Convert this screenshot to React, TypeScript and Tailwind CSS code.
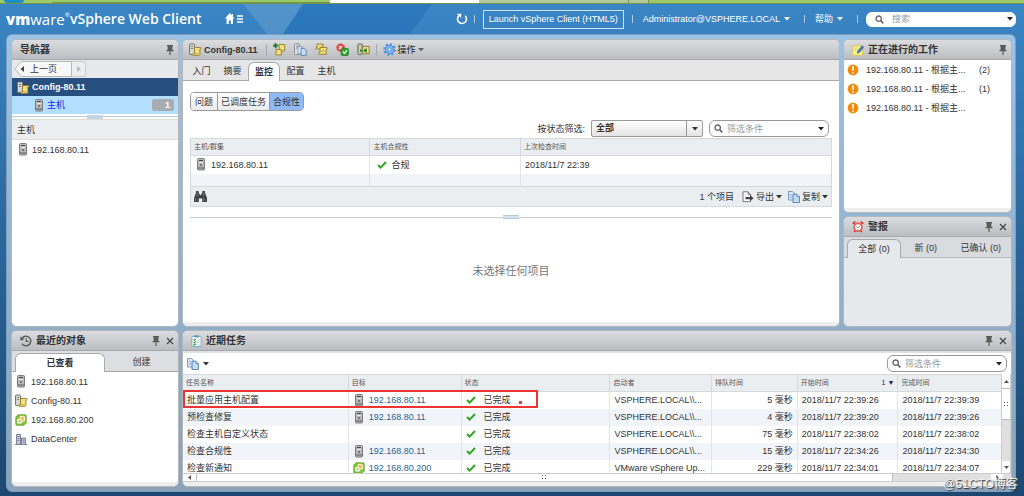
import type { ReactNode } from "react";

/* ---------- icons ---------- */

function HostIcon() {
  return (
    <svg width="12" height="13" viewBox="0 0 12 13" className="shrink-0" aria-hidden="true">
      <rect x="2.5" y="0.5" width="7" height="11.5" rx="1" fill="#b9b9b9" stroke="#7b7b7b" />
      <rect x="4" y="2" width="4" height="1" fill="#444" />
      <rect x="4" y="4" width="4" height="1" fill="#e8e8e8" />
      <rect x="5" y="6" width="2" height="2" fill="#777" />
      <rect x="3" y="9" width="6" height="2" fill="#8a8a8a" />
    </svg>
  );
}

function ProfileIcon() {
  return (
    <svg width="13" height="13" viewBox="0 0 13 13" className="shrink-0" aria-hidden="true">
      <rect x="0.5" y="1" width="5" height="10.5" rx="0.8" fill="#d7d7d2" stroke="#77766c" />
      <path d="M2 3.5h2M2 5.5h2" stroke="#666" strokeWidth="0.8" />
      <path d="M5.5 4.5h6.2q.8.8 0 1.6h-.8v5.4q-.3.9-1.2.9H4q-1-.8 0-1.7h1.5z" fill="#f3df7c" stroke="#8c7420" strokeWidth="0.8" />
      <path d="M5.5 10.7h4" stroke="#b99d38" strokeWidth="0.8" />
    </svg>
  );
}

function VCenterIcon() {
  return (
    <svg width="12" height="12" viewBox="0 0 12 12" className="shrink-0" aria-hidden="true">
      <path d="M3 .8h7.2q1 0 1 1V9L9 11.2H1.8q-1 0-1-1V3z" fill="#86c440" stroke="#5fa021" strokeWidth="0.8" />
      <rect x="2.2" y="5" width="4.6" height="4.6" rx="0.8" fill="#fff" />
      <rect x="5" y="2.4" width="4.6" height="4.6" rx="0.8" fill="#f6c445" stroke="#fff" strokeWidth="0.9" />
      <rect x="3.6" y="6.4" width="1.8" height="1.8" fill="#86c440" />
    </svg>
  );
}

function DatacenterIcon() {
  return (
    <svg width="12" height="12" viewBox="0 0 12 12" className="shrink-0" aria-hidden="true">
      <path d="M1.5 11V1.5h4V11M6.5 11V5h4v6" fill="#c8cbe0" stroke="#73768f" strokeWidth="0.9" />
      <path d="M2.5 3.5h2M2.5 5.5h2M2.5 7.5h2M7.5 7h2M7.5 9h2" stroke="#62668a" strokeWidth="0.8" />
      <path d="M0 11.4h12" stroke="#73768f" />
    </svg>
  );
}

function PinIcon() {
  return (
    <svg width="8" height="10" viewBox="0 0 8 10" aria-hidden="true">
      <path d="M1 0h6v1.2H6.4V5h1.1v1.3H4.6V10H3.4V6.3H.5V5h1.1V1.2H1z" fill="#5a5a5a" />
    </svg>
  );
}

function CloseIcon() {
  return (
    <svg width="8" height="8" viewBox="0 0 8 8" aria-hidden="true">
      <path d="M1 1l6 6M7 1L1 7" stroke="#444" strokeWidth="1.2" />
    </svg>
  );
}

function CheckIcon() {
  return (
    <svg width="10" height="8" viewBox="0 0 10 8" className="shrink-0" aria-hidden="true">
      <path d="M1 4l2.6 2.6L9 1" fill="none" stroke="#2fa51f" strokeWidth="2" />
    </svg>
  );
}

function CaretIcon() {
  return (
    <svg width="6" height="4" viewBox="0 0 6 4" className="shrink-0" aria-hidden="true">
      <path d="M0 0h6L3 3.6z" fill="currentColor" />
    </svg>
  );
}

function SearchIcon() {
  return (
    <svg width="9" height="9" viewBox="0 0 9 9" className="shrink-0" aria-hidden="true">
      <circle cx="3.7" cy="3.7" r="2.7" fill="none" stroke="#666" strokeWidth="1.4" />
      <path d="M5.7 5.7l2.6 2.6" stroke="#666" strokeWidth="1.7" />
    </svg>
  );
}

function WarningIcon() {
  return (
    <svg width="12" height="12" viewBox="0 0 12 12" className="shrink-0" aria-hidden="true">
      <circle cx="6" cy="6" r="5.4" fill="#f58a07" />
      <path d="M5 2.3h2L6.6 7H5.4z" fill="#fff" />
      <circle cx="6" cy="8.9" r="0.9" fill="#fff" />
    </svg>
  );
}

function CopyIcon() {
  return (
    <svg width="12" height="12" viewBox="0 0 12 12" className="shrink-0" aria-hidden="true">
      <path d="M.5.5h4l2 2V9h-6z" fill="#dbe8f6" stroke="#6f94bf" strokeWidth="0.9" />
      <path d="M1.8 3.5h2M1.8 5h2M1.8 6.5h2" stroke="#88a9cf" strokeWidth="0.7" />
      <path d="M5 3.2h4l2.4 2.4v6H5z" fill="#c6dcf3" stroke="#4d78ab" strokeWidth="0.9" />
      <path d="M9 3.2v2.4h2.4" fill="#fff" stroke="#4d78ab" strokeWidth="0.8" />
    </svg>
  );
}

function ExportIcon() {
  return (
    <svg width="12" height="12" viewBox="0 0 12 12" className="shrink-0" aria-hidden="true">
      <path d="M1 .8h5L8.6 3.4v7.2H1z" fill="#fff" stroke="#666" strokeWidth="0.9" />
      <path d="M6 .8v2.6h2.6" fill="none" stroke="#666" strokeWidth="0.8" />
      <path d="M3.5 6H8V4l3.6 3.2L8 10.2v-2H3.5z" fill="#444" />
    </svg>
  );
}

function HistoryIcon() {
  return (
    <svg width="12" height="12" viewBox="0 0 12 12" aria-hidden="true">
      <path d="M2.2 3A4.8 4.8 0 1 1 2 8.6" fill="none" stroke="#5d5d5d" strokeWidth="1.5" />
      <path d="M0 1.5l.6 4.3 4-1.5z" fill="#5d5d5d" />
      <path d="M6.2 3.3v3h2.5" fill="none" stroke="#5d5d5d" strokeWidth="1.2" />
    </svg>
  );
}

function TasksIcon() {
  return (
    <svg width="11" height="12" viewBox="0 0 11 12" aria-hidden="true">
      <rect x="0.9" y="1.4" width="9.2" height="10" rx="1" fill="#fff" stroke="#79a9ca" />
      <rect x="3.4" y="0.2" width="4.2" height="2.2" rx="0.6" fill="#5f95bd" />
      <path d="M2.5 4.6l.8.8L5 3.8M2.5 7.1l.8.8L5 6.3M2.5 9.5l.8.8L5 8.7" fill="none" stroke="#3aa02b" strokeWidth="1.1" />
      <path d="M6 5h2.6M6 7.4h2.6M6 9.8h2.6" stroke="#a6c0d2" strokeWidth="0.8" />
    </svg>
  );
}

function NoteIcon() {
  return (
    <svg width="12" height="12" viewBox="0 0 12 12" aria-hidden="true">
      <path d="M.6 1.6h10v9.8H.6z" fill="#fbf08b" stroke="#d0c05c" strokeWidth="0.8" />
      <path d="M2 4h4M2 6h3" stroke="#d0c268" strokeWidth="0.8" />
      <path d="M10 1.8l1.6 1.5-4 5-2.3.9.6-2.4z" fill="#3f86c9" stroke="#27517c" strokeWidth="0.6" />
    </svg>
  );
}

function AlarmIcon() {
  return (
    <svg width="12" height="12" viewBox="0 0 12 12" aria-hidden="true">
      <path d="M1.2 3.2q.2-1.8 2.2-2.1M10.8 3.2q-.2-1.8-2.2-2.1M3.2 9.4l-.9 1.6M8.8 9.4l.9 1.6" fill="none" stroke="#d33b36" strokeWidth="2" />
      <circle cx="6" cy="6.3" r="3.9" fill="#fff" stroke="#e0605b" strokeWidth="1.8" />
      <path d="M4.4 5.4L6 6.8l1.8-1.6" fill="none" stroke="#777" strokeWidth="0.9" />
    </svg>
  );
}

function GearIcon() {
  return (
    <svg width="13" height="13" viewBox="0 0 13 13" className="shrink-0" aria-hidden="true">
      <circle cx="6.5" cy="6.5" r="5.3" fill="none" stroke="#4a90d9" strokeWidth="2" strokeDasharray="2.1 2" />
      <circle cx="6.5" cy="6.5" r="4" fill="#8fc3f3" stroke="#4a90d9" strokeWidth="1.2" />
      <circle cx="6.5" cy="6.5" r="1.7" fill="#e8f3fd" stroke="#3e7cc4" strokeWidth="0.9" />
    </svg>
  );
}

function BinocularsIcon() {
  return (
    <svg width="13" height="11" viewBox="0 0 13 11" aria-hidden="true">
      <path d="M2 0h2.6v1.3L6 4h1l1.4-2.7V0H11v1.6L13 7v4H8.2V7.4H4.8V11H0V7l2-5.4z" fill="#444" />
      <path d="M1.6 7v3M9.8 7v3M3.2 2v3M9.8 2v3" stroke="#8b8b8b" strokeWidth="0.8" />
    </svg>
  );
}

function AttachProfileIcon() {
  return (
    <svg width="13" height="13" viewBox="0 0 13 13" aria-hidden="true">
      <path d="M6 1.5h6.2q.6 1-.6 1.6V8H6.4z" fill="#f3df7c" stroke="#8c7420" strokeWidth="0.8" />
      <path d="M3 6.5h5.4v5.4H3q-1-.8 0-1.6z" fill="#f3df7c" stroke="#8c7420" strokeWidth="0.8" />
      <path d="M2.6 0v5.2M0 2.6h5.2" stroke="#1c7b1c" strokeWidth="1.7" />
    </svg>
  );
}

function CopySettingsIcon() {
  return (
    <svg width="13" height="13" viewBox="0 0 13 13" aria-hidden="true">
      <rect x="0.5" y="0.9" width="5" height="10.6" rx="0.8" fill="#e2e2e2" stroke="#85858a" strokeWidth="0.9" />
      <path d="M2 3h2M2 5h2" stroke="#777" strokeWidth="0.8" />
      <path d="M4 3.6h4v7H4z" fill="#dce9f7" stroke="#6f94bf" strokeWidth="0.8" />
      <path d="M7 5.4h3l2.2 2v5H7z" fill="#c6dcf3" stroke="#4d78ab" strokeWidth="0.8" />
    </svg>
  );
}

function DuplicateProfileIcon() {
  return (
    <svg width="13" height="13" viewBox="0 0 13 13" aria-hidden="true">
      <path d="M2 1h6.2q.8.8 0 1.6h-.8V6H1q-.8-.8 0-1.5h1z" fill="#f0dc80" stroke="#8c7420" strokeWidth="0.8" />
      <path d="M5 4.5h7q.8.9 0 1.8h-.8v5H4q-1-.8 0-1.7h1z" fill="#f3df7c" stroke="#8c7420" strokeWidth="0.8" />
      <path d="M6 8h4" stroke="#b99d38" strokeWidth="0.9" />
    </svg>
  );
}

function ComplianceIcon() {
  return (
    <svg width="13" height="13" viewBox="0 0 13 13" aria-hidden="true">
      <circle cx="4.6" cy="4.6" r="4.2" fill="#e2403c" />
      <path d="M2.9 2.9l3.4 3.4M6.3 2.9L2.9 6.3" stroke="#fff" strokeWidth="1.2" />
      <rect x="5.2" y="5.4" width="7.2" height="7" rx="1" fill="#35a637" stroke="#1f7d21" strokeWidth="0.8" />
      <path d="M6.9 8.7l1.5 1.6 2.6-2.9" fill="none" stroke="#fff" strokeWidth="1.2" />
    </svg>
  );
}

function RemediateIcon() {
  return (
    <svg width="13" height="13" viewBox="0 0 13 13" aria-hidden="true">
      <rect x="0.9" y="1" width="4.4" height="10.4" rx="0.8" fill="#c9cbb8" stroke="#5c6050" strokeWidth="0.9" />
      <path d="M5.6 3.4h6.6v7.4H5.6z" fill="#ecdf93" stroke="#7d6d25" strokeWidth="0.8" />
      <path d="M9.5 5.6L6.4 7.6l3.1 2zM3 6.4l1.8 1.3L3 9" fill="#288a2a" stroke="#288a2a" strokeWidth="0.7" />
    </svg>
  );
}

/* triangles and grips of the scroll bars */
function ArrowIcon({ d }: { d: string }) {
  return (
    <svg width="5" height="5" viewBox="0 0 5 5" aria-hidden="true">
      <path d={d} fill="#555" />
    </svg>
  );
}

function GripIcon() {
  return (
    <svg width="5" height="5" viewBox="0 0 5 5" aria-hidden="true">
      <path d="M0 0h1v1H0zM3 0h1v1H3zM0 3h1v1H0zM3 3h1v1H3z" fill="#555" />
    </svg>
  );
}

/* ---------- shared pieces ---------- */

const panel = "flex min-h-0 min-w-0 flex-col overflow-hidden rounded-md border border-[#b3b7bc] bg-white";

type PanelHeaderProps = { icon?: ReactNode; title: string; closable?: boolean };

function PanelHeader({ icon, title, closable }: PanelHeaderProps) {
  return (
    <header className="flex h-5 shrink-0 items-center gap-1 border-b border-[#a7a9ac] bg-linear-to-b from-[#dcdde0] to-[#bbbdc0] pl-2 pr-1">
      {icon}
      <h2 className="flex-1 truncate text-[10px] font-bold text-[#333]">{title}</h2>
      <button aria-label="固定"><PinIcon /></button>
      {closable && <button aria-label="关闭" className="ml-0.5"><CloseIcon /></button>}
    </header>
  );
}

function SearchBox({ placeholder, className }: { placeholder: string; className: string }) {
  return (
    <label className={`flex items-center rounded-md border bg-white text-[#222] ${className}`}>
      <SearchIcon />
      <input aria-label={placeholder} placeholder={placeholder} className="w-0 flex-1 bg-transparent outline-none placeholder:text-[#999]" />
      <CaretIcon />
    </label>
  );
}

/* ---------- top bar ---------- */

function BrowserStrip() {
  return (
    <div className="flex h-1 shrink-0 border-b border-[#73954b] bg-[#9dc969]">
      <div className="ml-1 w-5 rounded-b-sm bg-[#1b8fc4]" />
      <div className="ml-7 w-[278px] border-b border-[#73954b]" />
      <div className="w-[149px] bg-white" />
      <div className="w-[150px] border-r border-[#73954b] bg-[#b4c79c]" />
      <div className="w-5 border-r border-[#73954b] bg-[#b4c79c]" />
    </div>
  );
}

function TopBar() {
  return (
    <div className="relative h-[30px] shrink-0">
      <svg className="absolute inset-y-0 left-0" width="440" height="30" aria-hidden="true">
        <path d="M243 0h60l-20 30h-16z" fill="#fff" opacity="0.12" />
        <path d="M303 0h129l-22 30H283z" fill="#1560b0" opacity="0.35" />
      </svg>
      <div className="relative flex h-full items-center pl-1.5 text-white">
        <span className="flex w-16 text-[15px] font-normal leading-5 font-['Open_Sans',sans-serif]">
          <b className="font-extrabold">vm</b>ware<span className="text-[6px] leading-3">®</span>
        </span>
        <h1 className="text-[14px] font-semibold leading-5 font-['Open_Sans',sans-serif]">vSphere Web Client</h1>
        <button aria-label="主页" className="ml-6">
          <svg width="19" height="12" viewBox="0 0 19 12" aria-hidden="true">
            <path d="M4.8 0L0 5.6h1.6V11h2.2V7.4h2V11H8V5.6h1.6L8 3.7V1H6.8v1.3z" fill="#fff" />
            <path d="M12 3h6M12 6h6M12 9h6" stroke="#fff" strokeWidth="1.4" />
          </svg>
        </button>
        <div className="ml-auto flex items-center">
          <button aria-label="刷新">
            <svg width="12" height="12" viewBox="0 0 12 12" aria-hidden="true">
              <path d="M3 2.6a4.5 4.5 0 1 0 6.2.2" fill="none" stroke="#fff" strokeWidth="1.6" />
              <path d="M.6.8h4.6v4.4L3.6 3.4z" fill="#fff" />
            </svg>
          </button>
          <span className="ml-1.5 h-2 w-px bg-[#a9cbe8]" />
          <a href="#" className="ml-2 flex h-[19px] items-center border border-[#cfe2f3] px-[5px]">Launch vSphere Client (HTML5)</a>
          <span className="ml-2 h-2 w-px bg-[#a9cbe8]" />
          <button className="ml-2.5 flex items-center gap-1">Administrator@VSPHERE.LOCAL <CaretIcon /></button>
          <span className="ml-3.5 h-2 w-px bg-[#a9cbe8]" />
          <button className="ml-2.5 flex items-center gap-1">帮助 <CaretIcon /></button>
          <span className="ml-3.5 mr-2 h-2 w-px bg-[#a9cbe8]" />
          <SearchBox placeholder="搜索" className="mr-2 h-[15px] w-[150px] gap-2 rounded-lg border-white pl-2 pr-0.5" />
        </div>
      </div>
    </div>
  );
}

/* ---------- left column ---------- */

function Navigator() {
  return (
    <nav className={`${panel} flex-1`}>
      <PanelHeader title="导航器" />
      <div className="flex h-[18px] shrink-0 items-center bg-[#e6e8ec] pl-0.5">
        <button className="relative flex h-4 w-[58px] items-center">
          <svg className="absolute inset-0" width="58" height="16" aria-hidden="true">
            <path d="M7.5.5h50v15h-50L.8 8z" fill="#f7f7f7" stroke="#b5b7ba" />
            <path d="M10 5v6L6.5 8z" fill="#444" />
          </svg>
          <span className="relative pl-4">上一页</span>
        </button>
        <button aria-label="前进" className="flex h-4 w-3.5 items-center justify-center rounded-r-sm border border-l-0 border-[#c9cbd0] bg-[#eceef0]">
          <svg width="4" height="6" aria-hidden="true"><path d="M0 0v6l4-3z" fill="#b5b7ba" /></svg>
        </button>
      </div>
      <a href="#" className="flex h-[18px] shrink-0 items-center gap-0.5 bg-[#274f80] pl-[5px] font-bold text-white">
        <ProfileIcon /> Config-80.11
      </a>
      <a href="#" className="flex h-[18px] shrink-0 items-center gap-0.5 bg-[#b3dfff] pl-[21px] pr-1 text-[#2222ee]">
        <HostIcon /> <span className="flex-1">主机</span>
        <span className="flex h-3 w-[22px] items-center justify-end rounded-xs bg-[#a9adb1] pr-1 font-bold text-white">1</span>
      </a>
      <div className="flex h-[6px] shrink-0 items-center justify-center border-b border-[#ddd] bg-white">
        <span className="h-px flex-1 bg-[#bccbdc]" />
        <span className="h-1 w-4 bg-[#c5d4e4]" />
        <span className="h-px flex-1 bg-[#bccbdc]" />
      </div>
      <h3 className="flex h-5 shrink-0 items-center border-b border-[#ddd] bg-[#ebeef1] pl-[5px]">主机</h3>
      <a href="#" className="flex h-[19px] items-center gap-[3px] pl-[5px]"><HostIcon /> 192.168.80.11</a>
    </nav>
  );
}

const recentObjects = [
  { icon: <HostIcon />, name: "192.168.80.11" },
  { icon: <ProfileIcon />, name: "Config-80.11" },
  { icon: <VCenterIcon />, name: "192.168.80.200" },
  { icon: <DatacenterIcon />, name: "DataCenter" },
];

function RecentObjects() {
  return (
    <section className={`${panel} h-full`}>
      <PanelHeader icon={<HistoryIcon />} title="最近的对象" closable />
      <div className="flex h-[21px] shrink-0 items-end border-b border-[#a7a9ac] bg-[#dcdee2] pl-[3px]">
        <button className="-mb-px h-[19px] w-[90px] rounded-t-md border border-b-0 border-[#a7a9ac] bg-white font-bold">已查看</button>
        <button className="h-[19px] flex-1">创建</button>
      </div>
      <ul className="flex-1">
        {recentObjects.map((o) => (
          <li key={o.name}>
            <a href="#" className="flex h-[19px] items-center pl-[3px]">
              <span className="flex w-4">{o.icon}</span>{o.name}
            </a>
          </li>
        ))}
      </ul>
      <div className="h-1 shrink-0 bg-[#eee]" />
    </section>
  );
}

/* ---------- centre ---------- */

const tabs = ["入门", "摘要", "监控", "配置", "主机"];
const toolbar = [
  { label: "附加", icon: <AttachProfileIcon /> },
  { label: "复制设置", icon: <CopySettingsIcon /> },
  { label: "复制配置文件", icon: <DuplicateProfileIcon /> },
  { label: "检查合规性", icon: <ComplianceIcon /> },
  { label: "修复", icon: <RemediateIcon /> },
];

function Workspace() {
  return (
    <main className={`${panel} flex-1`}>
      <header className="flex h-5 shrink-0 items-center border-b border-[#a7a9ac] bg-linear-to-b from-[#dcdde0] to-[#bbbdc0] pl-1.5">
        <ProfileIcon />
        <h2 className="ml-0.5 font-bold">Config-80.11</h2>
        <span className="ml-2 mr-1.5 h-3 w-px bg-[#a7a9ac]" />
        <div className="flex gap-2">
          {toolbar.map((t) => (
            <button key={t.label} aria-label={t.label}>{t.icon}</button>
          ))}
        </div>
        <span className="mx-1.5 h-3 w-px bg-[#a7a9ac]" />
        <button className="flex items-center gap-0.5 text-[#222]"><GearIcon />操作 <span className="flex text-[#666]"><CaretIcon /></span></button>
      </header>
      <div className="flex h-[21px] shrink-0 items-end border-b border-[#a7a9ac] bg-[#e6e6e6] pl-[3px]">
        {tabs.map((t) =>
          t === "监控" ? (
            <button key={t} className="-mb-px h-[19px] w-8 rounded-t-md border border-b-0 border-[#a7a9ac] bg-white font-bold">{t}</button>
          ) : (
            <button key={t} className="h-[18px] w-[31px]">{t}</button>
          )
        )}
      </div>
      <div className="flex min-h-0 flex-1 flex-col px-[7px] pt-[11px]">
        <div className="flex h-[19px] w-fit shrink-0 divide-x divide-[#999] overflow-hidden rounded-sm border border-[#999]">
          <button className="bg-linear-to-b from-white to-[#eaeaea] px-1">问题</button>
          <button className="bg-linear-to-b from-white to-[#eaeaea] px-[3px]">已调度任务</button>
          <button className="bg-[#8fbaf8] px-[3px]">合规性</button>
        </div>
        <div className="mt-[9px] flex shrink-0 items-center justify-end pr-[3px]">
          <label htmlFor="status-filter">按状态筛选:</label>
          <div className="relative ml-1.5">
            <select id="status-filter" className="h-[17px] w-28 appearance-none rounded-xs border border-[#999] bg-linear-to-b from-white to-[#e4e4e4] pl-1 font-bold leading-[15px]">
              <option>全部</option>
            </select>
            <span className="pointer-events-none absolute inset-y-px right-px flex w-4 items-center justify-center border-l border-[#999]"><CaretIcon /></span>
          </div>
          <SearchBox placeholder="筛选条件" className="ml-1.5 h-[17px] w-[120px] gap-1 border-[#999] px-1" />
        </div>
        <table className="mt-px w-full shrink-0 table-fixed border border-[#d5d8dc] text-left">
          <colgroup>
            <col className="w-[28%]" />
            <col className="w-[23.5%]" />
            <col />
          </colgroup>
          <thead>
            <tr className="h-[17px] border-b border-[#d5d8dc] bg-[#ebeef1] text-[7px] text-[#555]">
              <th className="px-[3px] font-normal">主机/群集</th>
              <th className="border-l border-[#d5d8dc] px-[3px] font-normal">主机合规性</th>
              <th className="border-l border-[#d5d8dc] px-[3px] font-normal">上次检查时间</th>
            </tr>
          </thead>
          <tbody>
            <tr className="h-[18px]">
              <td className="px-1"><span className="flex items-center gap-1"><HostIcon /> 192.168.80.11</span></td>
              <td className="border-l border-[#e2e4e7] px-[7px]"><span className="flex items-center gap-1"><CheckIcon /> 合规</span></td>
              <td className="border-l border-[#e2e4e7] px-1">2018/11/7 22:39</td>
            </tr>
            <tr className="h-[13px] bg-[#f1f5fa]">
              <td />
              <td className="border-l border-[#e2e4e7]" />
              <td className="border-l border-[#e2e4e7]" />
            </tr>
          </tbody>
        </table>
        <div className="flex h-5 shrink-0 items-center border border-t-0 border-[#d5d8dc] bg-[#ebeef1] px-[3px]">
          <button aria-label="查找"><BinocularsIcon /></button>
          <span className="ml-auto">1 个项目</span>
          <button className="ml-2 flex items-center gap-0.5"><ExportIcon />导出<CaretIcon /></button>
          <button className="ml-1.5 flex items-center gap-0.5"><CopyIcon />复制<CaretIcon /></button>
        </div>
        <div className="mt-2 flex h-1 shrink-0 items-center">
          <span className="h-px flex-1 bg-[#c3cedb]" />
          <span className="h-1 w-4 border-y border-[#b5c9de] bg-[#d5e1ed]" />
          <span className="h-px flex-1 bg-[#c3cedb]" />
        </div>
        <p className="flex flex-1 items-center justify-center text-[11px] text-[#777]">未选择任何项目</p>
      </div>
      <div className="h-1 shrink-0 bg-[#eee]" />
    </main>
  );
}

type Task = { name: string; target?: string; vc?: boolean; by: string; queued: string; start: string; end: string };

const tasks: Task[] = [
  { name: "批量应用主机配置", target: "192.168.80.11", by: "VSPHERE.LOCAL\\\\...", queued: "5 毫秒", start: "2018/11/7 22:39:26", end: "2018/11/7 22:39:39" },
  { name: "预检查修复", target: "192.168.80.11", by: "VSPHERE.LOCAL\\\\...", queued: "4 毫秒", start: "2018/11/7 22:39:20", end: "2018/11/7 22:39:26" },
  { name: "检查主机自定义状态", by: "VSPHERE.LOCAL\\\\...", queued: "75 毫秒", start: "2018/11/7 22:38:02", end: "2018/11/7 22:38:02" },
  { name: "检查合规性", target: "192.168.80.11", by: "VSPHERE.LOCAL\\\\...", queued: "15 毫秒", start: "2018/11/7 22:34:26", end: "2018/11/7 22:34:30" },
  { name: "检查新通知", target: "192.168.80.200", vc: true, by: "VMware vSphere Up...", queued: "229 毫秒", start: "2018/11/7 22:34:01", end: "2018/11/7 22:34:07" },
];

function TaskTable() {
  const th = "border-l border-[#d5d8dc] px-[3px] font-normal first:border-l-0";
  const td = "border-l border-[#e2e4e7] px-1 whitespace-nowrap first:border-l-0";
  return (
    <table className="w-full table-fixed text-left">
      <colgroup>
        <col className="w-[20.2%]" />
        <col className="w-[13.8%]" />
        <col className="w-[18.2%]" />
        <col className="w-[12.4%]" />
        <col className="w-[10.5%]" />
        <col className="w-[12.3%]" />
        <col />
      </colgroup>
      <thead>
        <tr className="h-[17px] border-y border-[#d5d8dc] bg-[#ebeef1] text-[7px] text-[#555]">
          <th className={th}>任务名称</th>
          <th className={th}>目标</th>
          <th className={th}>状态</th>
          <th className={th}>启动者</th>
          <th className={th}>排队时间</th>
          <th className={th}>
            <span className="flex items-center justify-between">开始时间 <span className="text-[#225]">1 ▼</span></span>
          </th>
          <th className={th}>完成时间</th>
        </tr>
      </thead>
      <tbody>
        {tasks.map((t) => (
          <tr key={t.name} className="h-[17px] even:bg-[#f1f5fa]">
            <td className={td}>{t.name}</td>
            <td className={td}>
              {t.target && (
                <a href="#" className="flex items-center gap-1 text-[#2a5f93]">
                  {t.vc ? <VCenterIcon /> : <HostIcon />} {t.target}
                </a>
              )}
            </td>
            <td className={td}><span className="flex items-center gap-2"><CheckIcon /> 已完成</span></td>
            <td className={td}>{t.by}</td>
            <td className={`${td} text-right`}>{t.queued}</td>
            <td className={td}>{t.start}</td>
            <td className={td}>{t.end}</td>
          </tr>
        ))}
      </tbody>
    </table>
  );
}

function RecentTasks() {
  return (
    <section className={`${panel} flex-1`}>
      <PanelHeader icon={<TasksIcon />} title="近期任务" closable />
      <div className="flex h-[23px] shrink-0 items-center border-t-2 border-[#dfe1e5] px-1">
        <button aria-label="复制" className="flex items-center gap-1"><CopyIcon /><CaretIcon /></button>
        <SearchBox placeholder="筛选条件" className="ml-auto h-[17px] w-[120px] gap-1 border-[#999] px-1" />
      </div>
      <div className="flex min-h-0 flex-1">
        <div className="relative min-w-0 flex-1">
          <div className="h-full overflow-hidden"><TaskTable /></div>
          {/* marked task */}
          <div className="absolute left-0 top-4 h-[18px] w-[355px] border-2 border-[#ee3333]">
            <span className="absolute bottom-0.5 right-3.5 size-[3px] bg-[#ee3333]" />
          </div>
        </div>
        <div className="flex w-[10px] shrink-0 flex-col border-x border-[#ccc] bg-[#e0e0e0]" aria-hidden="true">
          <span className="flex h-3.5 items-center justify-center bg-white"><ArrowIcon d="M0 4h5L2.5 1z" /></span>
          <span className="flex h-8 items-center justify-center border-y border-[#bbb] bg-white"><GripIcon /></span>
          <span className="mt-auto flex h-3 items-center justify-center bg-white"><ArrowIcon d="M0 1h5L2.5 4z" /></span>
        </div>
      </div>
      <div className="flex h-[9px] shrink-0 border-y border-[#ccc] bg-[#e0e0e0]" aria-hidden="true">
        <span className="flex w-3.5 items-center justify-center border-r border-[#bbb] bg-white"><ArrowIcon d="M4 0v5L1 2.5z" /></span>
        <span className="flex w-[84%] items-center justify-center border-r border-[#bbb] bg-white"><GripIcon /></span>
        <span className="ml-auto mr-2 flex w-3 items-center justify-center bg-white"><ArrowIcon d="M1 0v5l3-2.5z" /></span>
      </div>
      <div className="h-1 shrink-0 bg-[#eee]" />
    </section>
  );
}

/* ---------- right column ---------- */

const work = [
  { id: 1, count: "(2)" },
  { id: 2, count: "(1)" },
  { id: 3, count: "" },
];

function WorkInProgress() {
  return (
    <section className={`${panel} flex-1`}>
      <PanelHeader icon={<NoteIcon />} title="正在进行的工作" />
      <ul className="flex-1">
        {work.map((w) => (
          <li key={w.id} className="flex h-[19px] items-center pl-[3px]">
            <WarningIcon />
            <span className="ml-[7px] w-[113px]">192.168.80.11 - 根据主...</span>
            <span>{w.count}</span>
          </li>
        ))}
      </ul>
      <div className="h-1 shrink-0 bg-[#eee]" />
    </section>
  );
}

function Alarms() {
  return (
    <section className={`${panel} h-[111px] shrink-0`}>
      <PanelHeader icon={<AlarmIcon />} title="警报" closable />
      <div className="flex h-[21px] shrink-0 items-end border-b border-[#b3b7bc] bg-[#d9dbdf] pl-[3px]">
        <button className="-mb-px h-[19px] w-[54px] shrink-0 rounded-t-md border border-b-0 border-[#a7a9ac] bg-[#e6e8ec]">全部 (0)</button>
        <button className="h-[19px] flex-1">新 (0)</button>
        <button className="h-[19px] px-2.5">已确认 (0)</button>
      </div>
      <div className="flex-1 bg-[#e6e8ec]" />
    </section>
  );
}

export default function App() {
  return (
    <div className="relative flex h-screen flex-col overflow-hidden bg-linear-to-b from-[#3a86c6] to-[#1c4770] font-['Liberation_Sans','Noto_Sans_CJK_SC',sans-serif] text-[9px] leading-3 text-[#333]">
      <BrowserStrip />
      <TopBar />
      <div className="mb-1 ml-1.5 mr-2 flex min-h-0 flex-1 flex-col gap-[3px] rounded-md border border-[#7d9dba] bg-linear-to-b from-[#9cc2e5] to-[#8ba3b8] py-1 pl-1 pr-[3px]">
        <div className="flex min-h-0 flex-1 gap-[3px]">
          <div className="flex w-[168px] shrink-0 flex-col"><Navigator /></div>
          <Workspace />
          <div className="flex w-[169px] shrink-0 flex-col gap-[3px]">
            <WorkInProgress />
            <Alarms />
          </div>
        </div>
        <div className="flex h-[157px] shrink-0 gap-[3px]">
          <div className="w-[168px] shrink-0"><RecentObjects /></div>
          <RecentTasks />
        </div>
      </div>
      <span className="absolute bottom-1 right-1.5 text-[12px] leading-4 text-[#eee] [text-shadow:1px_1px_1px_#333]">@51CTO博客</span>
    </div>
  );
}
